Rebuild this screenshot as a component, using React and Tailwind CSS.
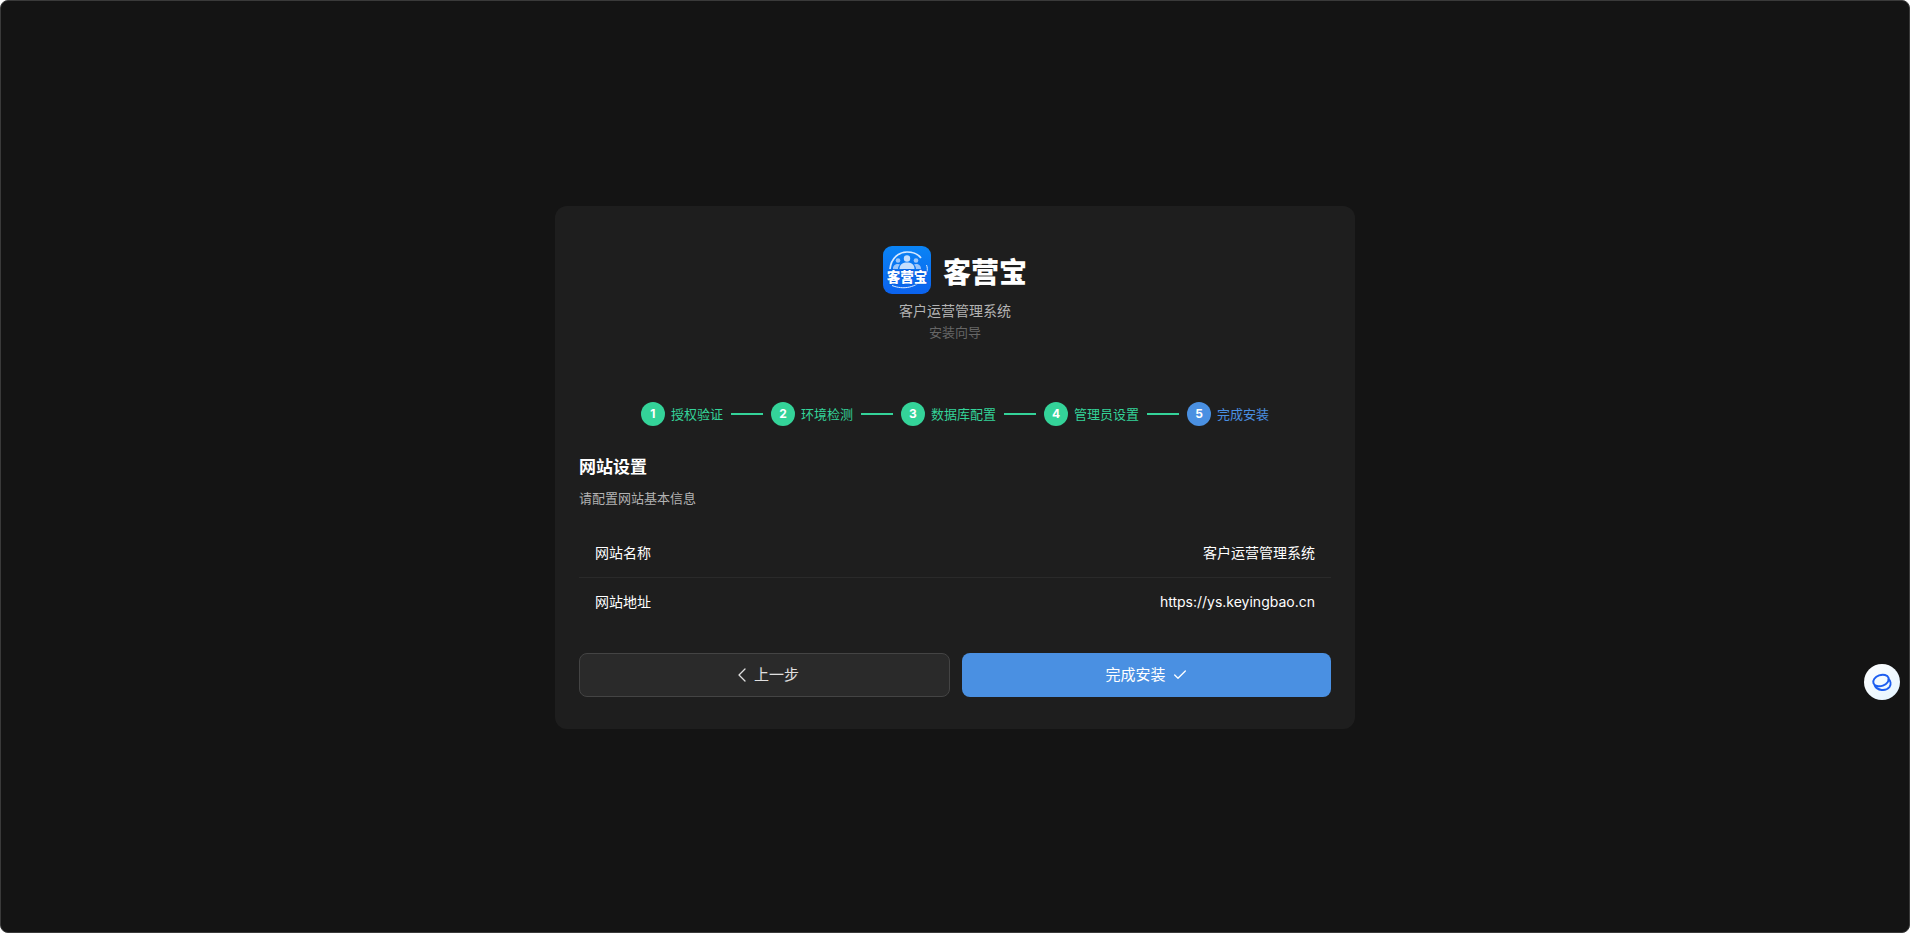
import React from 'react';
import { ChevronLeft, Check } from 'lucide-react';

const steps = [
    { n: 1, label: '授权验证', done: true },
    { n: 2, label: '环境检测', done: true },
    { n: 3, label: '数据库配置', done: true },
    { n: 4, label: '管理员设置', done: true },
    { n: 5, label: '完成安装', done: false },
];

const rows = [
    { label: '网站名称', value: '客户运营管理系统', height: 'h-[49px] border-b border-[#2a2a2a]' },
    { label: '网站地址', value: 'https://ys.keyingbao.cn', height: 'h-[47px]' },
];

function Logo() {
    return (
        <svg width="48" height="48" viewBox="0 0 48 48" className="shrink-0">
            <defs>
                <linearGradient id="logoBg" x1="0" y1="0" x2="0" y2="1">
                    <stop offset="0" stopColor="#0a84f5" />
                    <stop offset="1" stopColor="#0b62ee" />
                </linearGradient>
            </defs>
            <rect width="48" height="48" rx="9" fill="url(#logoBg)" />
            <path d="M7 23 C8 12 16 6 24 6 C30 6 35 8 38 12" fill="none" stroke="#d5e8ff" strokeWidth="1.7" />
            <circle cx="24" cy="12.5" r="3.2" fill="#c4defd" />
            <path d="M16.5 23 C16.5 18 20 16.5 24 16.5 C28 16.5 31.5 18 31.5 23 Z" fill="#c4defd" />
            <circle cx="15" cy="14.5" r="2.3" fill="#9cc6fa" />
            <path d="M10 23 C10 19.5 12 18 15 18 L17 18.5 C15.5 20 15 21.5 15 23 Z" fill="#9cc6fa" />
            <circle cx="33" cy="14.5" r="2.3" fill="#9cc6fa" />
            <path d="M38 23 C38 19.5 36 18 33 18 L31 18.5 C32.5 20 33 21.5 33 23 Z" fill="#9cc6fa" />
            <path d="M9 39.5 C20 44 34 42 41 31 C43.5 27 45.5 24 43.5 19" fill="none" stroke="#dcebff" strokeWidth="1" />
            <text
                x="24"
                y="35.5"
                textAnchor="middle"
                fontSize="13.5"
                fontWeight="900"
                fill="#ffffff"
                stroke="#0b5fe0"
                strokeWidth="1.4"
                paintOrder="stroke"
                fontFamily="'Noto Sans CJK SC', sans-serif"
            >
                客营宝
            </text>
        </svg>
    );
}

function Stepper() {
    return (
        <div className="flex items-center justify-center gap-2 mb-[29px]">
            {steps.map((step, idx) => (
                <React.Fragment key={step.n}>
                    <div className="flex items-center gap-1.5">
                        <span
                            className={`w-6 h-6 rounded-full flex items-center justify-center text-white text-xs font-bold ${step.done ? 'bg-[#34d399]' : 'bg-[#4a90e2]'}`}
                        >
                            {step.n}
                        </span>
                        <span className={`text-[13px] leading-5 ${step.done ? 'text-[#34d399]' : 'text-[#4a90e2]'}`}>{step.label}</span>
                    </div>
                    {idx < steps.length - 1 && <div className="w-8 h-0.5 bg-[#34d399]"></div>}
                </React.Fragment>
            ))}
        </div>
    );
}

export default function App() {
    return (
        <div
            className="h-[933px] w-full bg-[#141414] rounded-lg border border-[#3a3a3a] flex items-center justify-center relative overflow-hidden"
            style={{ fontFamily: "Inter, 'Noto Sans CJK SC', sans-serif" }}
        >
            <div className="w-[800px] bg-[#1e1e1e] rounded-xl p-6 mt-[2px]">
                {/* Header */}
                <div className="text-center mb-[60px] mt-4">
                    <div className="flex items-center justify-center gap-3 mb-1.5">
                        <Logo />
                        <h1 className="text-[28px] leading-10 font-extrabold text-white pt-[5px]">客营宝</h1>
                    </div>
                    <p className="text-sm leading-[22px] text-[#b3b3b3]">客户运营管理系统</p>
                    <p className="text-[13px] leading-5 text-[#666666]">安装向导</p>
                </div>

                <Stepper />

                <h2 className="text-[17px] leading-6 font-bold text-white mb-[9px]">网站设置</h2>
                <p className="text-[13px] leading-5 text-[#b3b3b3] mb-[21px]">请配置网站基本信息</p>

                <div className="mb-7">
                    {rows.map((row) => (
                        <div
                            key={row.label}
                            className={`flex items-center justify-between px-4 text-white text-sm ${row.height}`}
                        >
                            <span>{row.label}</span>
                            <span>{row.value}</span>
                        </div>
                    ))}
                </div>

                <div className="flex gap-3 mb-2">
                    <button className="flex-1 h-11 rounded-lg bg-[#2a2a2a] border border-[#444444] text-[#e0e0e0] text-[15px] flex items-center justify-center">
                        <ChevronLeft size={24} strokeWidth={1.3} />
                        上一步
                    </button>
                    <button className="flex-1 h-11 rounded-lg bg-[#4a90e2] text-white text-[15px] flex items-center justify-center gap-1.5">
                        完成安装
                        <Check size={16} strokeWidth={2} />
                    </button>
                </div>
            </div>

            {/* floating assistant */}
            <div className="absolute right-[9px] top-[663px] w-9 h-9 rounded-full bg-gradient-to-br from-white to-[#e4f4ff] flex items-center justify-center">
                <svg width="22" height="22" viewBox="0 0 22 22" fill="none" stroke="#1d5ef0" strokeWidth="2">
                    <ellipse cx="10" cy="9.5" rx="8" ry="5.5" transform="rotate(-20 10 9.5)" />
                    <path d="M3.5 14 C6 20 15 20.5 18.5 16 C20.5 13 19.5 9.5 17 7.5" />
                </svg>
            </div>
        </div>
    );
}
